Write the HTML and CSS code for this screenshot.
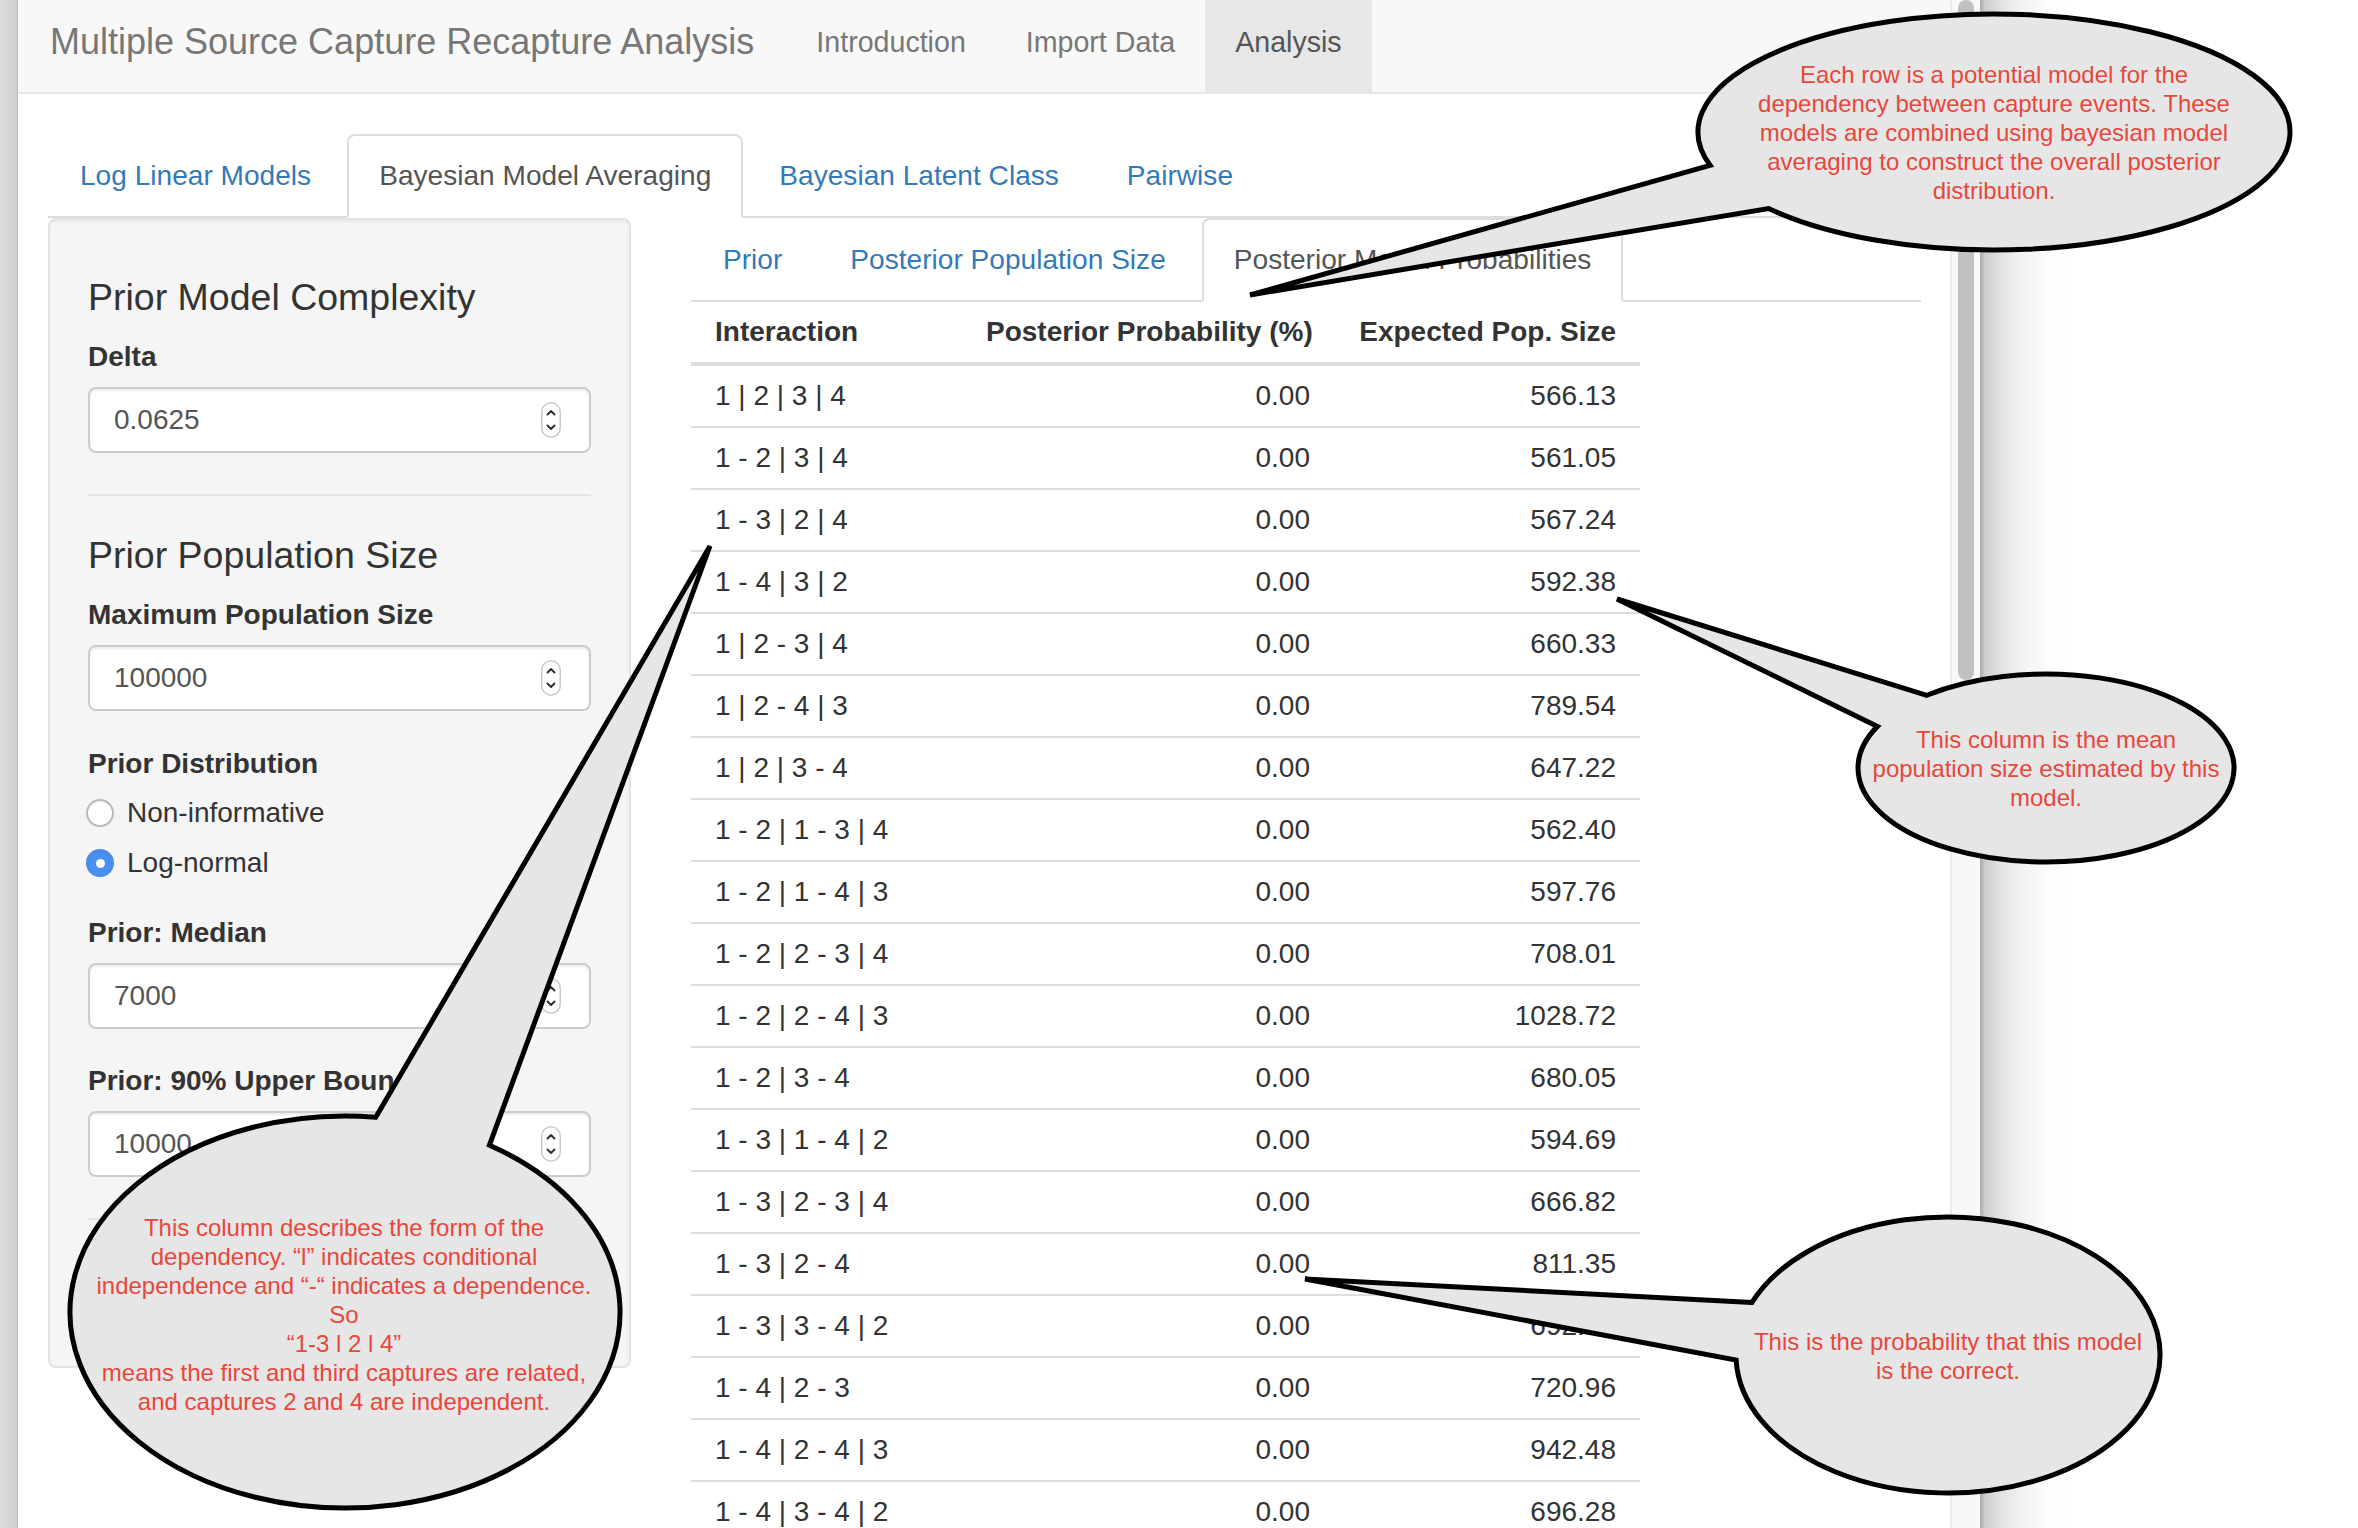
FILE: index.html
```html
<!DOCTYPE html>
<html lang="en">
<head>
<meta charset="utf-8">
<title>Multiple Source Capture Recapture Analysis</title>
<link rel="stylesheet" href="styles.css">
</head>
<body>
<div class="screen">
  <div class="edge"></div>
  <div class="page">
    <nav class="navbar">
      <span class="brand">Multiple Source Capture Recapture Analysis</span>
      <ul class="navlinks">
        <li><a href="#">Introduction</a></li>
        <li><a href="#">Import Data</a></li>
        <li class="active"><a href="#">Analysis</a></li>
      </ul>
    </nav>
    <div class="container">
      <ul class="tabs">
        <li><a href="#">Log Linear Models</a></li>
        <li class="active"><a href="#">Bayesian Model Averaging</a></li>
        <li><a href="#">Bayesian Latent Class</a></li>
        <li><a href="#">Pairwise</a></li>
      </ul>
      <div class="layout">
        <aside class="well">
          <h3 class="sec sec-first">Prior Model Complexity</h3>
          <div class="field">
            <label class="lab">Delta</label>
            <div class="input"><span>0.0625</span>
              <svg class="spin" width="20" height="36" viewBox="0 0 20 36"><rect x="0.75" y="0.75" width="18.5" height="34.5" rx="9.25" fill="#fff" stroke="#c9c9c9" stroke-width="1.5"/><path d="M6.5 12.5 L10 9 L13.5 12.5" fill="none" stroke="#333" stroke-width="2" stroke-linecap="round" stroke-linejoin="round"/><path d="M6.5 23.5 L10 27 L13.5 23.5" fill="none" stroke="#333" stroke-width="2" stroke-linecap="round" stroke-linejoin="round"/></svg>
            </div>
          </div>
          <hr class="sep">
          <h3 class="sec">Prior Population Size</h3>
          <div class="field">
            <label class="lab">Maximum Population Size</label>
            <div class="input"><span>100000</span>
              <svg class="spin" width="20" height="36" viewBox="0 0 20 36"><rect x="0.75" y="0.75" width="18.5" height="34.5" rx="9.25" fill="#fff" stroke="#c9c9c9" stroke-width="1.5"/><path d="M6.5 12.5 L10 9 L13.5 12.5" fill="none" stroke="#333" stroke-width="2" stroke-linecap="round" stroke-linejoin="round"/><path d="M6.5 23.5 L10 27 L13.5 23.5" fill="none" stroke="#333" stroke-width="2" stroke-linecap="round" stroke-linejoin="round"/></svg>
            </div>
          </div>
          <div class="field radios">
            <label class="lab">Prior Distribution</label>
            <div class="radio"><span class="dot"></span>Non-informative</div>
            <div class="radio"><span class="dot checked"></span>Log-normal</div>
          </div>
          <div class="field">
            <label class="lab">Prior: Median</label>
            <div class="input"><span>7000</span>
              <svg class="spin" width="20" height="36" viewBox="0 0 20 36"><rect x="0.75" y="0.75" width="18.5" height="34.5" rx="9.25" fill="#fff" stroke="#c9c9c9" stroke-width="1.5"/><path d="M6.5 12.5 L10 9 L13.5 12.5" fill="none" stroke="#333" stroke-width="2" stroke-linecap="round" stroke-linejoin="round"/><path d="M6.5 23.5 L10 27 L13.5 23.5" fill="none" stroke="#333" stroke-width="2" stroke-linecap="round" stroke-linejoin="round"/></svg>
            </div>
          </div>
          <div class="field">
            <label class="lab">Prior: 90% Upper Bound</label>
            <div class="input"><span>10000</span>
              <svg class="spin" width="20" height="36" viewBox="0 0 20 36"><rect x="0.75" y="0.75" width="18.5" height="34.5" rx="9.25" fill="#fff" stroke="#c9c9c9" stroke-width="1.5"/><path d="M6.5 12.5 L10 9 L13.5 12.5" fill="none" stroke="#333" stroke-width="2" stroke-linecap="round" stroke-linejoin="round"/><path d="M6.5 23.5 L10 27 L13.5 23.5" fill="none" stroke="#333" stroke-width="2" stroke-linecap="round" stroke-linejoin="round"/></svg>
            </div>
          </div>
          <hr class="sep">
        </aside>
        <main class="panel">
          <ul class="tabs">
            <li><a href="#">Prior</a></li>
            <li><a href="#">Posterior Population Size</a></li>
            <li class="active"><a href="#">Posterior Model Probabilities</a></li>
          </ul>
          <table class="results">
            <colgroup><col class="c1"><col class="c2"><col class="c3"></colgroup>
            <thead>
              <tr><th>Interaction</th><th class="num">Posterior Probability (%)</th><th class="num">Expected Pop. Size</th></tr>
            </thead>
            <tbody>
              <tr><td>1 | 2 | 3 | 4</td><td class="num">0.00</td><td class="num">566.13</td></tr>
              <tr><td>1 - 2 | 3 | 4</td><td class="num">0.00</td><td class="num">561.05</td></tr>
              <tr><td>1 - 3 | 2 | 4</td><td class="num">0.00</td><td class="num">567.24</td></tr>
              <tr><td>1 - 4 | 3 | 2</td><td class="num">0.00</td><td class="num">592.38</td></tr>
              <tr><td>1 | 2 - 3 | 4</td><td class="num">0.00</td><td class="num">660.33</td></tr>
              <tr><td>1 | 2 - 4 | 3</td><td class="num">0.00</td><td class="num">789.54</td></tr>
              <tr><td>1 | 2 | 3 - 4</td><td class="num">0.00</td><td class="num">647.22</td></tr>
              <tr><td>1 - 2 | 1 - 3 | 4</td><td class="num">0.00</td><td class="num">562.40</td></tr>
              <tr><td>1 - 2 | 1 - 4 | 3</td><td class="num">0.00</td><td class="num">597.76</td></tr>
              <tr><td>1 - 2 | 2 - 3 | 4</td><td class="num">0.00</td><td class="num">708.01</td></tr>
              <tr><td>1 - 2 | 2 - 4 | 3</td><td class="num">0.00</td><td class="num">1028.72</td></tr>
              <tr><td>1 - 2 | 3 - 4</td><td class="num">0.00</td><td class="num">680.05</td></tr>
              <tr><td>1 - 3 | 1 - 4 | 2</td><td class="num">0.00</td><td class="num">594.69</td></tr>
              <tr><td>1 - 3 | 2 - 3 | 4</td><td class="num">0.00</td><td class="num">666.82</td></tr>
              <tr><td>1 - 3 | 2 - 4</td><td class="num">0.00</td><td class="num">811.35</td></tr>
              <tr><td>1 - 3 | 3 - 4 | 2</td><td class="num">0.00</td><td class="num">692.17</td></tr>
              <tr><td>1 - 4 | 2 - 3</td><td class="num">0.00</td><td class="num">720.96</td></tr>
              <tr><td>1 - 4 | 2 - 4 | 3</td><td class="num">0.00</td><td class="num">942.48</td></tr>
              <tr><td>1 - 4 | 3 - 4 | 2</td><td class="num">0.00</td><td class="num">696.28</td></tr>
            </tbody>
          </table>
        </main>
      </div>
    </div>
  </div>
  <div class="scrollbar"><div class="thumb"></div></div>
  <div class="shadow"></div>
</div>

<svg class="callouts" width="2358" height="1528" viewBox="0 0 2358 1528">
  <path class="bubble" d="M1710.04,165.32 L1250,295 L1768.58,208.48 A296,118 0 1 0 1710.04,165.32 Z"/>
  <path class="bubble" d="M1926.79,695.31 L1617,599 L1877.44,726.38 A188,94 0 1 0 1926.79,695.31 Z"/>
  <path class="bubble" d="M1751.96,1302.45 L1305,1279 L1736.14,1360.01 A212,138 0 1 0 1751.96,1302.45 Z"/>
  <path class="bubble" d="M375.75,1117.23 L710,546 L489.44,1145.21 A275,196 0 1 1 375.75,1117.23 Z"/>
</svg>

<div class="note n1">Each row is a potential model for the<br>dependency between capture events. These<br>models are combined using bayesian model<br>averaging to construct the overall posterior<br>distribution.</div>
<div class="note n2">This column is the mean<br>population size estimated by this<br>model.</div>
<div class="note n3">This is the probability that this model<br>is the correct.</div>
<div class="note n4">This column describes the form of the<br>dependency. “l” indicates conditional<br>independence and “-“ indicates a dependence.<br>So<br>“1-3 l 2 l 4”<br>means the first and third captures are related,<br>and captures 2 and 4 are independent.</div>
</body>
</html>
```

FILE: styles.css
```css
* { box-sizing: border-box; }

html, body {
  margin: 0;
  padding: 0;
  width: 2358px;
  height: 1528px;
  overflow: hidden;
  background: #fff;
  font-family: "Liberation Sans", Arial, Helvetica, sans-serif;
  color: #333;
}

.screen {
  display: flex;
  height: 1528px;
}

.edge {
  flex: 0 0 18px;
  background: linear-gradient(to right, #dcdcdc, #cfcfcf);
  border-right: 1px solid #b8b8b8;
}

.page {
  flex: 0 0 1932px;
  background: #fff;
  overflow: hidden;
}

.scrollbar {
  flex: 0 0 30px;
  background: #f8f8f8;
  border-left: 2px solid #ebebeb;
  padding: 0 6px;
}

.thumb {
  height: 680px;
  background: #c1c1c1;
  border-radius: 8px;
}

.shadow {
  flex: 1;
  background: linear-gradient(to right, #a8a8a8 0, #cdcdcd 5px, #e4e4e4 22px, #f4f4f4 45px, #fdfdfd 70px, #fff 90px);
}

/* navbar */
.navbar {
  display: flex;
  height: 94px;
  background: #f8f8f8;
  border-bottom: 2px solid #e7e7e7;
  padding-left: 32px;
}

.brand {
  display: flex;
  align-items: center;
  padding-bottom: 8px;
  font-size: 36px;
  color: #777;
  margin-right: 32px;
  white-space: nowrap;
}

.navlinks {
  display: flex;
  list-style: none;
  margin: 0;
  padding: 0;
}

.navlinks a {
  display: flex;
  align-items: center;
  height: 92px;
  padding: 0 30px 8px;
  font-size: 28.6px;
  color: #777;
  text-decoration: none;
}

.navlinks .active a {
  background: #e7e7e7;
  color: #555;
}

/* container */
.container {
  padding: 40px 29px 0 30px;
}

.tabs {
  display: flex;
  list-style: none;
  margin: 0;
  padding: 0;
  border-bottom: 2px solid #ddd;
}

.tabs li {
  margin-bottom: -2px;
  margin-right: 4px;
}

.tabs a {
  display: block;
  padding: 20px 30px;
  line-height: 40px;
  font-size: 28.1px;
  color: #337ab7;
  border: 2px solid transparent;
  border-radius: 8px 8px 0 0;
  text-decoration: none;
  white-space: nowrap;
}

.tabs .active a {
  color: #555;
  background: #fff;
  border-color: #ddd #ddd transparent;
}

.layout {
  display: grid;
  grid-template-columns: 583px 1230px;
  column-gap: 60px;
  align-items: start;
}

/* sidebar well */
.well {
  height: 1150px;
  background: #f5f5f5;
  border: 2px solid #e3e3e3;
  border-radius: 8px;
  box-shadow: inset 0 2px 2px rgba(0, 0, 0, 0.05);
  padding: 38px;
}

.sec {
  margin: 38px 0 0;
  font-size: 37.5px;
  line-height: 42px;
  font-weight: 500;
  color: #333;
  white-space: nowrap;
}

.sec-first {
  margin-top: 18px;
}

.field {
  margin-top: 32px;
}

.sec + .field {
  margin-top: 19px;
}

.hr + .field {
  margin-top: 33px;
}

.radios {
  margin-top: 33px;
}

.radios + .field {
  margin-top: 25px;
}

.lab {
  display: block;
  font-size: 28px;
  line-height: 40px;
  font-weight: bold;
  margin-bottom: 10px;
  white-space: nowrap;
  color: #333;
}

.input {
  display: flex;
  align-items: center;
  justify-content: space-between;
  height: 66px;
  background: #fff;
  border: 2px solid #ccc;
  border-radius: 8px;
  box-shadow: inset 0 2px 2px rgba(0, 0, 0, 0.075);
  padding: 0 28px 0 24px;
  font-size: 28px;
  color: #555;
}

.spin {
  display: block;
  flex: 0 0 auto;
}

.sep {
  border: 0;
  border-top: 2px solid #e6e6e6;
  margin: 41px 0 0;
  height: 0;
}

.radios .lab {
  margin-bottom: 4px;
}

.radio {
  display: flex;
  align-items: center;
  height: 50px;
  font-size: 28px;
  color: #333;
  margin-left: -2px;
}

.dot {
  position: relative;
  width: 28px;
  height: 28px;
  border-radius: 50%;
  background: #fff;
  border: 2px solid #b9b9b9;
  box-shadow: inset 0 1px 1px rgba(0, 0, 0, 0.06);
  margin-right: 13px;
  flex: 0 0 auto;
}

.dot.checked {
  background: #4a90f0;
  border-color: #4a8cea;
}

.dot.checked::after {
  content: "";
  position: absolute;
  left: 50%;
  top: 50%;
  width: 9px;
  height: 9px;
  margin: -4.5px 0 0 -4.5px;
  border-radius: 50%;
  background: #fff;
}

/* results table */
.results {
  border-collapse: collapse;
  table-layout: fixed;
  width: 949px;
  font-size: 28px;
  color: #333;
}

.c1 { width: 271px; }
.c2 { width: 372px; }
.c3 { width: 306px; }

.results th,
.results td {
  padding: 10px 24px;
  line-height: 40px;
  text-align: left;
  white-space: nowrap;
}

.results th {
  font-weight: bold;
  border-bottom: 4px solid #ddd;
}

.results td {
  border-bottom: 2px solid #ddd;
}

.results .num {
  text-align: right;
}

/* callouts */
.callouts {
  position: absolute;
  left: 0;
  top: 0;
  pointer-events: none;
}

.bubble {
  fill: #e6e6e6;
  stroke: #000;
  stroke-width: 5;
  stroke-linejoin: miter;
}

.note {
  position: absolute;
  font-size: 24px;
  line-height: 29px;
  color: #e8473c;
  text-align: center;
  white-space: nowrap;
}

.n1 { left: 1694px; top: 60px; width: 600px; }
.n2 { left: 1846px; top: 725px; width: 400px; }
.n3 { left: 1748px; top: 1327px; width: 400px; }
.n4 { left: 44px; top: 1213px; width: 600px; }
```
